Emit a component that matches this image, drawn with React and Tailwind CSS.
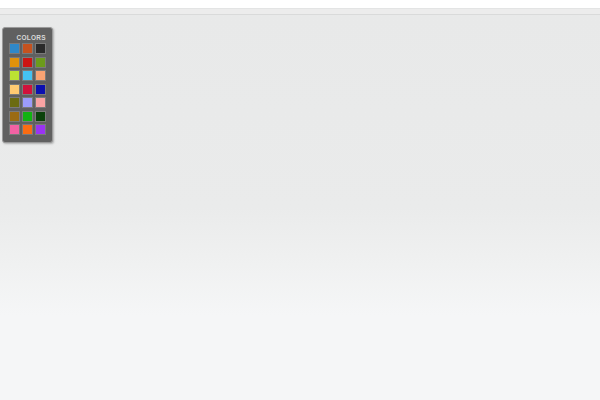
import React from "react";

const colors = [
  "#2f88c8", "#c5521f", "#2a2a2a",
  "#e0920c", "#cc1512", "#6c9b1b",
  "#bce232", "#44c2f2", "#f9a373",
  "#ffca72", "#d1123b", "#0b0fb0",
  "#6b6b12", "#9c9cfa", "#f9a3a3",
  "#9b6b12", "#12b312", "#0b420b",
  "#f262a3", "#fa6c12", "#9a33f3",
];

export default function App() {
  return (
    <div className="w-[600px] h-[400px] flex flex-col overflow-hidden bg-white" style={{ fontFamily: '"Liberation Sans", Arial, sans-serif' }}>
      <div className="h-[8px] bg-white shrink-0" />
      <div className="h-[7px] shrink-0 border-t border-[#e3e4e4] border-b border-b-[#d9dada] bg-[#ececec]" />
      <div className="flex-1 bg-[linear-gradient(to_bottom,#e8e9e9_0%,#eaebeb_50%,#f0f1f1_65%,#f5f6f7_78%,#f5f6f7_100%)] pt-[12px] pl-[2px]">
        <div className="w-[51px] rounded-[3px] border border-[#9a9a9a] bg-[#606060] shadow-[1px_1px_2px_rgba(0,0,0,0.25)] pt-[6px] pb-[7px] px-[6px]">
          <div className="text-right text-[6.5px] font-bold leading-[7px] tracking-[0.3px] text-[#d8d8d8] pr-[0px] mb-[2px]">COLORS</div>
          <div className="grid grid-cols-[11px_11px_11px] gap-x-[2px] gap-y-[2.5px]">
            {colors.map((c, i) => (
              <div key={i} className="w-[11px] h-[11px] border border-[#7a7a7a]" style={{ backgroundColor: c }} />
            ))}
          </div>
        </div>
      </div>
    </div>
  );
}
